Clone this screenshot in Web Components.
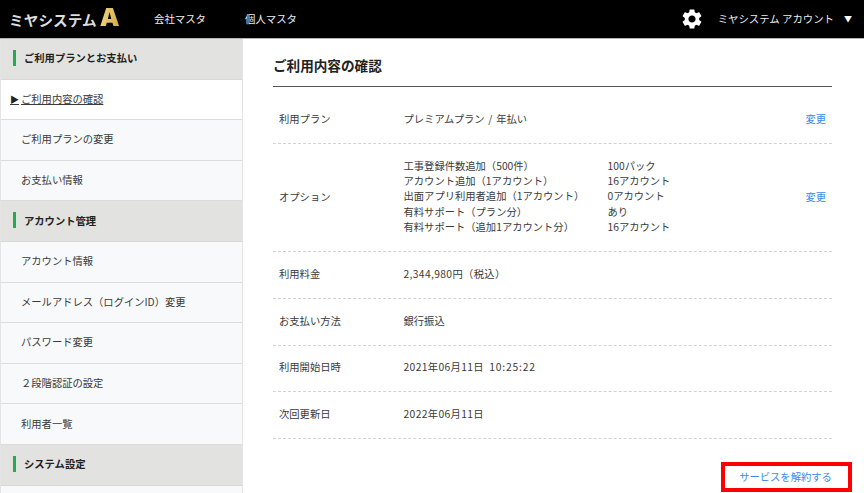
<!DOCTYPE html>
<html lang="ja">
<head>
<meta charset="utf-8">
<title>ご利用内容の確認</title>
<style>
html, body { margin: 0; height: 493px; overflow: hidden; background: #fff; }
body { font: 10.3px "Noto Sans CJK JP", "Liberation Sans", sans-serif; color: #3a3a3a; }
.time { letter-spacing: .8px; margin-left: 3px; }
.date { letter-spacing: .35px; }
.plan { word-spacing: 1.5px; }
</style>
</head>
<body>
<app-shell>
    <app-header slot="header"></app-header>
    <side-nav slot="side">
        <nav-section>ご利用プランとお支払い</nav-section>
        <nav-item current>ご利用内容の確認</nav-item>
        <nav-item>ご利用プランの変更</nav-item>
        <nav-item>お支払い情報</nav-item>
        <nav-section>アカウント管理</nav-section>
        <nav-item>アカウント情報</nav-item>
        <nav-item>メールアドレス（ログインID）変更</nav-item>
        <nav-item>パスワード変更</nav-item>
        <nav-item>２段階認証の設定</nav-item>
        <nav-item>利用者一覧</nav-item>
        <nav-section>システム設定</nav-section>
        <nav-item></nav-item>
    </side-nav>
    <main-panel slot="main" heading="ご利用内容の確認">
        <info-row first label="利用プラン" action="変更" height="57"><span class="plan">プレミアムプラン / 年払い</span></info-row>
        <info-row label="オプション" action="変更" height="108">
            <option-list>
                <span>工事登録件数追加（500件）</span><span>100パック</span>
                <span>アカウント追加（1アカウント）</span><span>16アカウント</span>
                <span>出面アプリ利用者追加（1アカウント）</span><span>0アカウント</span>
                <span>有料サポート（プラン分）</span><span>あり</span>
                <span>有料サポート（追加1アカウント分）</span><span>16アカウント</span>
            </option-list>
        </info-row>
        <info-row label="利用料金" height="46.8"><span class="date">2,344,980円（税込）</span></info-row>
        <info-row label="お支払い方法" height="46.8">銀行振込</info-row>
        <info-row label="利用開始日時" height="46.8"><span class="date">2021年06月11日</span> <span class="time">10:25:22</span></info-row>
        <info-row label="次回更新日" height="46.8"><span class="date">2022年06月11日</span></info-row>
        <cancel-button slot="footer">サービスを解約する</cancel-button>
    </main-panel>
</app-shell>
<script>
class AppShell extends HTMLElement {
    constructor() {
        super()
        this.attachShadow({ mode: 'open' })
        this.shadowRoot.innerHTML = `
            <style>
                :host { display: block; width: 864px; height: 493px; overflow: hidden; }
                .body { display: flex; height: 454px; }
            </style>
            <slot name="header"></slot>
            <div class="body">
                <slot name="side"></slot>
                <slot name="main"></slot>
            </div>
        `
    }
}

class AppHeader extends HTMLElement {
    constructor() {
        super()
        this.attachShadow({ mode: 'open' })
        this.shadowRoot.innerHTML = `
            <style>
                :host {
                    display: flex;
                    align-items: center;
                    height: 38px;
                    background: #000;
                    border-bottom: 1px solid #b5b5b5;
                    color: #eee;
                    font-size: 10.4px;
                }
                span { position: relative; top: -1px; }
                .logo { display: flex; align-items: center; width: 154px; padding-left: 9px; box-sizing: border-box; }
                .logo b { font-size: 14.6px; font-weight: 700; color: #ddd; letter-spacing: .1px; }
                .logo i {
                    font: normal 900 25px/1 Inter, "Liberation Sans", sans-serif;
                    background: linear-gradient(100deg, #f0d98a, #d4a83f);
                    -webkit-background-clip: text;
                    background-clip: text;
                    color: transparent;
                    margin-left: 3px;
                    margin-top: -3px;
                }
                .menu { width: 91px; }
                .space { flex: 1; }
                svg { width: 24px; height: 24px; fill: #fff; margin-right: 14px; }
                .arrow { margin: 0 12px 0 10px; font-size: 8px; color: #fff; }
            </style>
            <div class="logo"><b>ミヤシステム</b><i>A</i></div>
            <span class="menu">会社マスタ</span>
            <span class="menu">個人マスタ</span>
            <span class="space"></span>
            <svg viewBox="0 0 24 24"><path d="M19.14 12.94c.04-.3.06-.61.06-.94 0-.32-.02-.64-.07-.94l2.03-1.58c.18-.14.23-.41.12-.61l-1.92-3.32c-.12-.22-.37-.29-.59-.22l-2.39.96c-.5-.38-1.03-.7-1.62-.94l-.36-2.54c-.04-.24-.24-.41-.48-.41h-3.84c-.24 0-.43.17-.47.41l-.36 2.54c-.59.24-1.13.57-1.62.94l-2.39-.96c-.22-.08-.47 0-.59.22L2.74 8.87c-.12.21-.08.47.12.61l2.03 1.58c-.05.3-.09.63-.09.94s.02.64.07.94l-2.03 1.58c-.18.14-.23.41-.12.61l1.92 3.32c.12.22.37.29.59.22l2.39-.96c.5.38 1.03.7 1.62.94l.36 2.54c.05.24.24.41.48.41h3.84c.24 0 .44-.17.47-.41l.36-2.54c.59-.24 1.13-.56 1.62-.94l2.39.96c.22.08.47 0 .59-.22l1.92-3.32c.12-.22.07-.47-.12-.61l-2.01-1.58zM12 15.6c-1.98 0-3.6-1.62-3.6-3.6s1.62-3.6 3.6-3.6 3.6 1.62 3.6 3.6-1.62 3.6-3.6 3.6z"/></svg>
            <span>ミヤシステム アカウント</span>
            <span class="arrow">▼</span>
        `
    }
}

class SideNav extends HTMLElement {
    constructor() {
        super()
        this.attachShadow({ mode: 'open' })
        this.shadowRoot.innerHTML = `
            <style>
                :host {
                    display: block;
                    flex: none;
                    width: 243px;
                    box-sizing: border-box;
                    border-left: 1px solid #e4e4e4;
                    border-right: 1px solid #e4e4e4;
                    background: #f8f9fb;
                }
            </style>
            <slot></slot>
        `
    }
}

class NavSection extends HTMLElement {
    constructor() {
        super()
        this.attachShadow({ mode: 'open' })
        this.shadowRoot.innerHTML = `
            <style>
                :host {
                    display: flex;
                    align-items: center;
                    height: 40.6px;
                    box-sizing: border-box;
                    background: #e2e2e0;
                    border-bottom: 1px solid #d8d8d8;
                    padding: 0 0 2px 12px;
                    font-weight: 700;
                    color: #222;
                }
                .mark { width: 3px; height: 16px; background: #21ad4e; margin-right: 8px; }
            </style>
            <span class="mark"></span><slot></slot>
        `
    }
}

class NavItem extends HTMLElement {
    constructor() {
        super()
        this.attachShadow({ mode: 'open' })
        this.shadowRoot.innerHTML = `
            <style>
                :host {
                    display: flex;
                    align-items: center;
                    height: 40.6px;
                    box-sizing: border-box;
                    border-bottom: 1px solid #dcdcdc;
                    padding: 0 0 2px 20px;
                }
                :host([current]) { background: #fff; padding-left: 9px; }
                .arrow { display: none; font-size: 9px; color: #222; margin-right: 2px; }
                :host([current]) .arrow { display: inline; }
                :host([current]) .label { text-decoration: underline; }
            </style>
            <span class="label"><span class="arrow">▶</span><slot></slot></span>
        `
    }
}

class MainPanel extends HTMLElement {
    constructor() {
        super()
        this.attachShadow({ mode: 'open' })
        this.shadowRoot.innerHTML = `
            <style>
                :host {
                    display: block;
                    flex: 1;
                    padding: 0 32px 0 30px;
                    background: #fff;
                }
                h1 {
                    margin: 0;
                    height: 48px;
                    line-height: 52px;
                    box-sizing: border-box;
                    border-bottom: 1px solid #555;
                    font-size: 13.6px;
                    font-weight: 700;
                    color: #222;
                }
                .footer { display: flex; justify-content: flex-end; margin: 22.5px -20px 0 0; }
            </style>
            <h1></h1>
            <slot></slot>
            <div class="footer"><slot name="footer"></slot></div>
        `
        this.shadowRoot.querySelector('h1').textContent = this.getAttribute('heading')
    }
}

class InfoRow extends HTMLElement {
    constructor() {
        super()
        this.attachShadow({ mode: 'open' })
        this.shadowRoot.innerHTML = `
            <style>
                :host {
                    display: flex;
                    align-items: center;
                    box-sizing: border-box;
                    border-bottom: 1px dashed #d2d2d2;
                    padding: 0 6px 3px 6px;
                }
                :host([first]) { padding: 6px 6px 0 6px; }
                .label { width: 124.5px; flex: none; }
                .value { flex: 1; }
                .action { color: #3b8beb; }
            </style>
            <span class="label"></span>
            <div class="value"><slot></slot></div>
            <span class="action"></span>
        `
        this.shadowRoot.querySelector('.label').textContent = this.getAttribute('label')
        this.shadowRoot.querySelector('.action').textContent = this.getAttribute('action') || ''
        this.style.height = this.getAttribute('height') + 'px'
    }
}

class OptionList extends HTMLElement {
    constructor() {
        super()
        this.attachShadow({ mode: 'open' })
        this.shadowRoot.innerHTML = `
            <style>
                :host {
                    display: grid;
                    grid-template-columns: 204px auto;
                    line-height: 15.2px;
                }
            </style>
            <slot></slot>
        `
    }
}

class CancelButton extends HTMLElement {
    constructor() {
        super()
        this.attachShadow({ mode: 'open' })
        this.shadowRoot.innerHTML = `
            <style>
                :host {
                    display: block;
                    width: 131px;
                    height: 30px;
                    line-height: 21px;
                    box-sizing: border-box;
                    border: 4px solid #f00;
                    padding-right: 2px;
                    text-align: center;
                    color: #3b8beb;
                }
            </style>
            <slot></slot>
        `
    }
}

customElements.define('app-shell', AppShell)
customElements.define('app-header', AppHeader)
customElements.define('side-nav', SideNav)
customElements.define('nav-section', NavSection)
customElements.define('nav-item', NavItem)
customElements.define('main-panel', MainPanel)
customElements.define('info-row', InfoRow)
customElements.define('option-list', OptionList)
customElements.define('cancel-button', CancelButton)
</script>
</body>
</html>
